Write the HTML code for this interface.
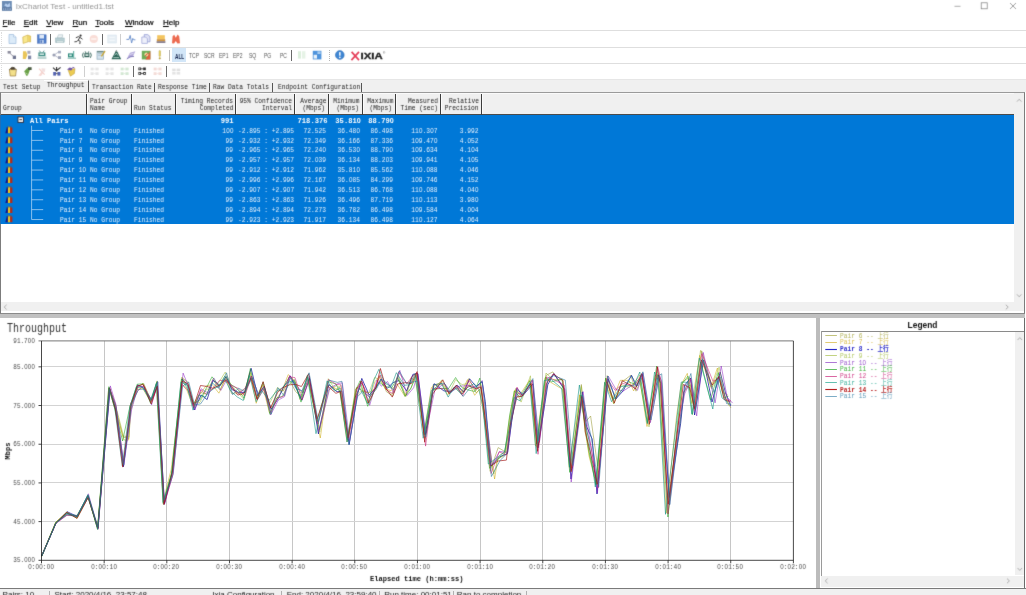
<!DOCTYPE html>
<html><head><meta charset="utf-8"><title>IxChariot Test - untitled1.tst</title>
<style>
html,body{margin:0;padding:0;background:#fff;}
#w{position:relative;width:1026px;height:595px;overflow:hidden;background:#fff;font-family:"Liberation Sans",sans-serif;}
#w div,#w svg{position:absolute;}
#L0,#L1{left:0;top:0;width:1026px;height:595px;}
#L1{filter:url(#bl);}
.m{font-family:"Liberation Mono","Noto Sans CJK SC",monospace;white-space:pre;line-height:10px;height:10px;}
.m i{display:inline-block;width:0.6001em;text-align:center;font-style:normal;font-family:"Liberation Sans",sans-serif;}
.s{font-family:"Liberation Sans",sans-serif;white-space:pre;}
u{text-decoration:underline;text-decoration-thickness:0.55px;text-underline-offset:0.6px;}
</style></head><body><svg width="0" height="0" style="position:absolute"><defs><filter id="bl" x="0" y="0" width="100%" height="100%" color-interpolation-filters="sRGB"><feConvolveMatrix order="3" kernelMatrix="0.022 0.145 0.022 0.145 1 0.145 0.022 0.145 0.022" divisor="1.668" edgeMode="none" preserveAlpha="false"/></filter></defs></svg><div id="w">
<div id="L0">
<div style="left:0px;top:30.2px;width:1026px;height:1px;background:#dedede;"></div>
<div style="left:0px;top:46.6px;width:1026px;height:1px;background:#dedede;"></div>
<div style="left:0px;top:62.9px;width:1026px;height:1px;background:#dedede;"></div>
<div style="left:0px;top:79.3px;width:1026px;height:0.8px;background:#e6e6e6;"></div>
<div style="left:1px;top:32px;width:0;height:46px;border-left:1px dotted #dcdcdc;"></div>
<div style="left:50.2px;top:33.5px;width:0.8px;height:11.299999999999997px;background:#6a6a6a;"></div>
<div style="left:69.19999999999999px;top:33.5px;width:0.8px;height:11.299999999999997px;background:#cfcfcf;"></div>
<div style="left:102.19999999999999px;top:33.5px;width:0.8px;height:11.299999999999997px;background:#6a6a6a;"></div>
<div style="left:120.19999999999999px;top:33.5px;width:0.8px;height:11.299999999999997px;background:#cfcfcf;"></div>
<div style="left:169.2px;top:49.5px;width:0.8px;height:11.5px;background:#bdbdbd;"></div>
<div style="left:171.5px;top:48.4px;width:14.4px;height:13.4px;background:#d2e6f8;"></div>
<div style="left:291.20000000000005px;top:49.5px;width:0.8px;height:11.5px;background:#6a6a6a;"></div>
<div style="left:329px;top:49.5px;width:0;height:11.5px;border-left:1px dotted #b5b5b5;"></div>
<div style="left:84.19999999999999px;top:65.5px;width:0.8px;height:11.5px;background:#cfcfcf;"></div>
<div style="left:133.2px;top:65.5px;width:0.8px;height:11.5px;background:#6a6a6a;"></div>
<div style="left:166.2px;top:65.5px;width:0.8px;height:11.5px;background:#6a6a6a;"></div>
<div style="left:0px;top:80px;width:1026px;height:12.4px;background:#f0f0f0;"></div>
<div style="left:43.5px;top:80px;width:44.5px;height:13px;background:#f0f0f0;border-right:1px solid #555;border-top:0.6px solid #fff;"></div>
<div style="left:153.79999999999998px;top:82.6px;width:0.9px;height:9px;background:#555;"></div>
<div style="left:209.4px;top:82.6px;width:0.9px;height:9px;background:#555;"></div>
<div style="left:272.20000000000005px;top:82.6px;width:0.9px;height:9px;background:#555;"></div>
<div style="left:361.20000000000005px;top:82.6px;width:0.9px;height:9px;background:#555;"></div>
<div style="left:0px;top:92px;width:1025.1px;height:221.6px;background:#fff;box-sizing:border-box;border:1px solid #7c7c7c;border-top-color:#9a9a9a;border-bottom:1.4px solid #8a8a8a;"></div>
<div style="left:1px;top:93px;width:1013px;height:21.6px;background:#f0f0f0;"></div>
<div style="left:1px;top:114.2px;width:1013px;height:0.9px;background:#4a4a4a;"></div>
<div style="left:85.9px;top:93px;width:1px;height:21.6px;background:#3c3c3c;"></div>
<div style="left:86.9px;top:93px;width:0.8px;height:21.4px;background:#fbfbfb;"></div>
<div style="left:131.0px;top:93px;width:1px;height:21.6px;background:#3c3c3c;"></div>
<div style="left:132.0px;top:93px;width:0.8px;height:21.4px;background:#fbfbfb;"></div>
<div style="left:175.3px;top:93px;width:1px;height:21.6px;background:#3c3c3c;"></div>
<div style="left:176.3px;top:93px;width:0.8px;height:21.4px;background:#fbfbfb;"></div>
<div style="left:235.1px;top:93px;width:1px;height:21.6px;background:#3c3c3c;"></div>
<div style="left:236.1px;top:93px;width:0.8px;height:21.4px;background:#fbfbfb;"></div>
<div style="left:294.0px;top:93px;width:1px;height:21.6px;background:#3c3c3c;"></div>
<div style="left:295.0px;top:93px;width:0.8px;height:21.4px;background:#fbfbfb;"></div>
<div style="left:328.1px;top:93px;width:1px;height:21.6px;background:#3c3c3c;"></div>
<div style="left:329.1px;top:93px;width:0.8px;height:21.4px;background:#fbfbfb;"></div>
<div style="left:361.7px;top:93px;width:1px;height:21.6px;background:#3c3c3c;"></div>
<div style="left:362.7px;top:93px;width:0.8px;height:21.4px;background:#fbfbfb;"></div>
<div style="left:395.1px;top:93px;width:1px;height:21.6px;background:#3c3c3c;"></div>
<div style="left:396.1px;top:93px;width:0.8px;height:21.4px;background:#fbfbfb;"></div>
<div style="left:439.9px;top:93px;width:1px;height:21.6px;background:#3c3c3c;"></div>
<div style="left:440.9px;top:93px;width:0.8px;height:21.4px;background:#fbfbfb;"></div>
<div style="left:480.6px;top:93px;width:1px;height:21.6px;background:#3c3c3c;"></div>
<div style="left:481.6px;top:93px;width:0.8px;height:21.4px;background:#fbfbfb;"></div>
<div style="left:1px;top:93px;width:1013px;height:0.7px;background:#fafafa;"></div>
<div style="left:1px;top:115.0px;width:1013px;height:108.60000000000001px;background:#0078d7;"></div>
<div style="left:0px;top:115.0px;width:1px;height:108.60000000000001px;background:#1f6fb8;"></div>
<svg style="left:0;top:0" width="60" height="230" viewBox="0 0 60 230"><path d="M31.6 125.7V219.5M31.6 130.45H43.2M31.6 140.35H43.2M31.6 150.25H43.2M31.6 160.15H43.2M31.6 170.05H43.2M31.6 179.95H43.2M31.6 189.85H43.2M31.6 199.75H43.2M31.6 209.65H43.2M31.6 219.55H43.2" stroke="#a9d1f3" stroke-width=".8" fill="none"/></svg>
<div style="left:1014px;top:93px;width:10.2px;height:209.5px;background:#f0f0f0;"></div>
<div style="left:1px;top:302.4px;width:1023.2px;height:9.1px;background:#f0f0f0;"></div>
<div style="left:0px;top:313.6px;width:1024.6px;height:4.0px;background:#c1c1c1;"></div>
<div style="left:815.7px;top:317.6px;width:4.7px;height:270px;background:#bcbcbc;"></div>
<svg style="left:0;top:0" width="816" height="588" viewBox="0 0 816 588"><path d="M104.5 340.9V560.3M166.5 340.9V560.3M229.5 340.9V560.3M292.5 340.9V560.3M354.5 340.9V560.3M417.5 340.9V560.3M480.5 340.9V560.3M542.5 340.9V560.3M605.5 340.9V560.3M668.5 340.9V560.3M730.5 340.9V560.3" stroke="#c6c6c6" stroke-width="1" fill="none"/><path d="M41.5 521.5H793.4M41.5 482.5H793.4M41.5 444.5H793.4M41.5 405.5H793.4M41.5 366.5H793.4" stroke="#d3d3d3" stroke-width="1" fill="none"/><path d="M41.8 555.5L56.0 522.0L66.9 512.8L77.0 516.7L88.0 495.7L97.7 527.1L109.5 388.8L115.1 404.9L123.0 437.0L128.8 438.5L130.9 410.3L137.6 386.8L143.7 383.4L151.3 401.2L157.0 380.9L163.8 505.0L172.1 472.6L182.2 378.0L187.9 382.0L193.7 403.3L200.5 392.5L206.8 394.2L212.7 379.5L220.0 389.9L225.7 377.3L231.6 393.5L238.3 392.7L244.9 388.5L250.9 376.3L257.2 398.7L263.2 387.8L270.6 408.1L277.8 390.2L283.5 390.8L289.3 379.5L295.4 391.3L301.6 397.1L308.2 379.3L319.5 430.0L328.7 389.8L336.7 385.5L340.8 388.6L348.1 441.2L356.5 387.4L361.0 389.9L368.6 392.9L375.6 388.5L379.9 375.6L386.4 391.7L392.8 396.0L397.9 375.3L405.9 396.4L412.5 375.7L416.6 373.4L424.8 438.3L433.2 384.6L442.4 384.1L449.3 393.6L456.9 385.3L462.7 392.0L469.0 378.5L476.2 392.9L481.6 387.5L484.3 408.5L490.1 471.3L498.2 447.6L506.0 452.2L510.5 415.4L515.6 388.6L521.2 397.1L530.9 383.4L537.9 443.2L546.3 375.3L552.9 371.9L564.1 389.5L571.4 470.3L581.3 384.5L585.9 421.5L590.6 416.0L597.6 466.0L607.2 375.6L613.7 403.8L622.6 381.5L630.7 375.3L636.0 391.2L641.9 377.9L649.1 420.3L657.1 374.1L660.6 383.6L667.8 499.7L679.4 428.2L683.6 392.0L690.3 384.7L694.1 408.6L701.7 350.8L712.1 386.9L719.1 376.5L725.5 398.1L730.9 407.9" stroke="#8c8c1e" stroke-width="0.5" fill="none" stroke-linejoin="round"/><path d="M41.8 555.8L55.6 522.4L66.6 512.2L76.9 518.1L88.0 495.9L97.6 529.2L108.7 388.2L115.0 408.9L124.0 440.0L128.6 440.0L130.2 405.7L136.7 389.7L142.5 388.0L150.7 402.1L156.5 387.0L163.3 501.0L171.2 469.4L181.6 384.1L186.8 390.0L193.5 407.3L199.4 395.0L205.8 386.1L212.2 384.5L218.9 393.2L224.9 380.5L230.9 386.3L237.0 392.8L243.4 395.3L249.9 372.6L256.2 403.3L262.5 385.4L269.5 413.0L276.4 399.2L282.3 389.9L288.2 374.6L294.0 380.0L300.1 399.6L307.2 376.7L320.3 438.0L327.6 384.8L335.1 388.2L339.8 390.4L347.0 442.0L355.4 389.2L360.5 385.8L367.8 402.9L374.9 381.8L379.2 376.7L385.1 388.7L391.1 390.8L396.8 383.6L404.9 396.3L411.2 377.4L415.7 381.9L424.1 432.7L431.4 387.5L441.1 382.0L447.6 394.9L455.3 387.8L460.9 393.2L467.5 379.6L474.7 395.3L479.4 389.3L482.9 410.1L494.6 479.0L497.7 458.9L504.5 455.4L509.2 420.5L514.3 390.6L520.4 394.0L530.0 379.5L535.6 446.0L545.1 377.8L550.9 382.4L562.4 389.3L569.3 467.3L579.5 394.9L584.1 419.0L589.0 455.9L596.1 484.0L604.6 382.7L612.6 399.1L620.3 380.3L629.0 380.4L633.6 390.9L639.8 378.9L647.0 426.5L655.1 375.2L658.6 377.9L666.2 513.2L676.8 414.4L681.2 384.6L687.3 373.4L691.9 403.5L699.7 355.3L711.1 387.2L717.4 368.0L722.6 392.5L727.8 395.1" stroke="#c9a400" stroke-width="0.5" fill="none" stroke-linejoin="round"/><path d="M41.8 556.1L56.0 522.9L67.1 511.7L77.3 516.5L88.2 497.6L97.9 528.3L110.0 389.3L115.6 409.3L123.5 466.7L131.1 404.4L137.6 384.9L143.5 387.7L151.3 400.1L157.4 386.2L164.5 504.1L172.5 470.1L182.3 379.2L188.1 386.0L194.2 410.0L201.2 395.0L207.1 399.6L213.0 380.4L219.9 385.3L226.3 376.5L231.8 389.5L238.2 392.2L244.6 392.5L251.1 368.3L257.8 395.9L264.2 386.2L271.1 409.3L278.2 398.6L283.7 386.8L290.2 376.1L295.8 386.8L301.8 400.3L309.5 378.4L318.4 433.9L328.8 384.5L337.0 391.8L341.8 391.0L349.2 444.5L357.6 394.0L361.8 378.4L369.2 395.1L376.0 387.9L381.0 379.1L387.1 388.5L393.1 382.5L399.1 380.5L406.7 390.9L412.9 374.3L417.9 373.6L425.3 434.7L434.1 383.7L443.9 390.9L450.1 391.4L457.1 385.2L463.7 392.0L469.6 378.8L476.1 386.5L482.2 381.7L485.3 401.7L490.8 465.9L499.6 456.8L507.3 453.7L511.5 422.8L516.9 388.2L522.9 395.6L532.8 383.9L538.0 447.9L547.8 384.7L553.8 373.7L564.2 388.9L571.0 479.0L582.3 391.9L586.5 426.3L592.2 439.0L597.0 494.0L608.1 378.9L615.7 399.1L623.1 390.9L631.5 375.3L636.3 386.6L642.3 374.1L649.8 420.0L658.2 374.9L660.8 383.2L669.4 497.7L680.6 423.8L684.6 385.3L690.6 377.9L694.6 415.0L703.6 360.0L712.0 402.0L720.2 372.1L725.5 392.9L730.7 405.9" stroke="#10109a" stroke-width="0.72" fill="none" stroke-linejoin="round"/><path d="M41.8 556.6L55.8 522.5L66.8 512.1L77.0 518.3L88.1 497.5L97.7 529.5L109.5 387.8L115.2 403.6L123.5 436.0L128.9 437.0L130.6 405.4L137.4 388.7L142.9 383.4L151.0 399.8L156.9 382.5L163.4 504.5L172.2 470.2L181.8 377.0L187.5 385.5L193.3 402.9L199.8 402.6L206.5 389.0L212.6 389.5L219.3 381.8L225.2 372.1L231.0 385.0L237.4 392.1L244.1 399.6L250.7 372.5L257.0 399.1L263.0 384.1L269.5 403.7L277.4 387.5L282.8 391.3L289.0 376.8L294.4 380.9L301.0 393.0L308.5 380.9L319.8 432.0L328.3 378.7L335.4 390.4L340.7 385.6L348.0 437.7L356.1 396.7L361.1 391.2L368.8 392.9L374.7 377.3L379.7 380.2L386.1 389.2L392.0 394.5L397.5 377.4L404.9 394.8L411.1 387.9L416.4 374.3L424.0 434.5L432.6 391.6L441.8 379.9L448.8 393.8L455.6 379.6L462.1 384.6L467.8 383.5L475.5 391.3L480.9 383.7L483.4 405.8L493.8 474.0L498.4 457.0L505.4 450.5L509.9 426.5L515.3 389.9L521.1 402.1L530.4 375.8L536.8 447.3L546.0 373.0L552.6 379.4L562.9 379.9L571.2 467.9L581.3 386.4L584.9 430.7L589.7 456.8L596.5 483.1L605.6 378.0L613.6 403.7L621.2 384.6L629.3 387.3L634.6 382.4L639.9 375.0L649.0 426.9L656.9 377.0L660.2 377.8L668.2 514.0L677.6 427.4L682.5 382.0L689.1 377.6L693.4 405.6L700.5 350.4L711.4 388.6L719.1 367.1L724.5 394.9L729.0 405.7" stroke="#9ab82e" stroke-width="0.5" fill="none" stroke-linejoin="round"/><path d="M41.8 555.9L56.0 522.9L67.1 515.2L77.3 516.2L88.4 493.8L98.0 529.2L110.3 385.9L115.7 403.7L123.9 464.8L131.6 409.8L138.1 385.9L144.3 386.9L151.6 404.9L157.8 382.0L164.2 504.6L173.3 473.0L183.1 373.1L188.4 386.3L195.1 409.9L201.1 388.7L207.6 392.9L213.8 377.9L220.8 390.4L227.0 379.4L232.5 387.5L238.8 394.0L245.6 387.9L251.6 376.3L258.2 394.0L264.1 386.5L270.6 415.0L278.3 400.1L284.6 396.6L289.9 375.4L295.7 384.7L302.8 393.0L309.4 376.1L318.7 431.3L329.8 388.2L337.6 383.7L342.3 382.8L349.6 440.5L358.1 388.3L362.3 381.8L369.7 405.3L376.9 380.0L381.3 386.2L387.5 381.5L393.9 392.7L399.8 370.3L407.2 395.4L413.6 387.8L417.7 374.1L425.8 433.5L434.9 389.7L444.6 383.6L451.1 392.2L457.5 386.4L464.4 385.8L470.1 385.5L476.7 387.9L482.1 380.5L485.5 412.1L492.1 464.9L499.5 451.4L507.9 452.5L511.8 418.1L517.9 393.4L522.6 394.7L532.8 380.5L539.4 442.3L547.6 380.6L554.4 373.9L564.9 389.0L571.2 482.0L583.1 391.6L587.4 424.4L592.8 457.8L597.4 493.0L608.2 376.0L616.2 389.7L623.5 390.9L632.1 385.3L637.5 390.3L643.0 372.8L650.4 422.7L659.4 375.8L661.6 381.6L669.5 505.1L680.2 416.9L684.8 393.5L691.0 379.8L696.7 415.9L703.2 352.4L715.1 402.9L721.2 366.0L727.2 397.3L732.6 403.1" stroke="#8a1fc0" stroke-width="0.52" fill="none" stroke-linejoin="round"/><path d="M41.8 555.5L55.8 522.4L66.7 514.9L77.0 515.6L87.9 495.5L97.6 528.0L108.8 386.7L115.0 409.8L122.6 441.0L129.9 406.5L137.2 384.2L143.0 383.9L150.6 403.4L156.8 382.3L163.2 503.5L171.6 473.2L181.4 378.9L186.9 387.9L193.3 403.6L199.9 400.0L206.2 388.4L212.0 376.8L218.8 386.0L224.9 375.9L230.9 384.4L237.5 388.9L244.0 398.0L250.3 368.6L256.8 397.5L263.2 381.9L269.9 414.3L276.9 397.7L282.2 396.6L288.4 385.1L294.7 379.7L301.0 402.1L307.4 375.3L317.0 421.5L328.0 381.6L335.8 383.9L340.0 392.4L347.3 439.7L355.9 389.7L360.1 380.8L367.7 406.3L375.0 388.9L379.0 382.2L385.0 386.2L391.6 388.1L397.5 377.5L405.1 396.4L410.6 389.0L416.0 375.3L424.3 434.7L432.6 389.6L441.7 388.3L448.3 388.9L455.6 377.5L461.9 387.6L467.8 389.9L474.7 391.5L479.8 378.1L482.8 404.1L489.5 468.3L497.5 459.9L504.8 453.0L509.7 414.9L514.4 391.1L520.0 397.0L529.9 380.8L536.6 444.0L545.5 377.2L551.4 381.8L562.1 379.2L569.7 472.4L580.9 395.0L584.6 421.5L588.8 450.1L596.1 485.1L605.6 378.3L613.5 399.7L620.9 391.0L628.6 381.7L634.5 384.2L639.4 378.7L647.3 422.6L656.7 366.0L658.6 381.4L667.9 517.0L677.5 422.7L682.1 383.8L688.0 376.1L692.4 414.6L700.8 362.0L710.5 399.9L718.2 372.7L723.6 398.2L728.3 396.3" stroke="#16a016" stroke-width="0.52" fill="none" stroke-linejoin="round"/><path d="M41.8 555.4L55.9 523.6L67.0 514.9L77.2 515.9L88.2 495.7L98.0 528.4L109.6 388.1L115.8 404.9L123.5 463.7L130.8 403.3L137.9 390.9L143.7 385.1L151.5 401.5L157.3 386.7L164.1 504.2L172.6 475.6L182.2 384.6L188.2 390.4L194.1 407.9L200.6 389.9L206.9 394.7L212.6 388.3L219.7 380.2L225.8 381.1L231.7 385.5L237.9 388.2L244.9 395.9L251.4 376.1L257.4 399.8L263.7 389.4L270.9 412.8L277.4 398.4L283.9 396.0L289.1 376.7L295.0 377.7L302.2 399.8L309.0 380.7L318.0 424.0L328.4 379.6L336.9 384.6L341.0 384.8L348.3 439.6L356.9 394.3L361.6 382.9L369.7 397.9L376.4 384.5L380.2 374.9L386.6 390.0L392.6 393.5L398.5 372.1L406.7 383.8L412.7 376.0L416.7 373.0L425.6 446.1L432.9 388.3L443.3 388.7L449.4 392.7L456.6 387.0L462.7 396.0L468.8 380.5L476.3 389.5L481.1 385.6L484.3 415.4L491.1 473.5L499.1 451.9L506.6 454.9L511.5 416.0L517.0 387.1L521.7 396.2L532.3 380.0L538.0 454.3L546.6 377.0L553.5 379.6L564.4 385.3L571.7 468.1L581.7 395.9L586.7 430.4L590.8 445.7L598.1 488.0L606.7 378.4L615.2 390.4L622.6 383.4L631.3 385.6L636.0 383.4L641.5 374.4L649.8 417.7L657.7 366.6L661.6 382.9L667.9 513.9L678.9 418.5L684.2 391.8L690.6 378.7L694.5 410.5L701.8 353.7L713.0 381.3L719.7 378.1L725.5 398.8L730.9 401.0" stroke="#c81470" stroke-width="0.52" fill="none" stroke-linejoin="round"/><path d="M41.8 556.1L55.6 523.6L66.7 513.1L76.9 517.6L87.8 494.7L97.6 529.4L109.0 388.3L114.8 408.2L122.3 465.8L129.8 407.1L136.4 387.0L142.7 387.5L150.3 400.8L156.3 383.4L163.0 502.4L171.5 475.2L180.9 382.0L187.1 385.4L193.0 410.1L199.0 394.9L205.6 397.0L212.0 382.7L218.4 388.1L224.8 378.8L230.5 390.9L237.2 396.9L243.3 400.5L249.6 375.5L256.2 401.7L262.1 391.2L269.1 400.5L276.1 391.5L281.6 388.2L287.9 382.2L293.7 381.2L300.1 398.5L307.7 377.3L316.0 433.7L327.0 380.9L334.7 391.2L339.8 388.1L347.1 442.0L355.1 397.2L359.8 387.8L367.8 403.9L374.2 379.5L378.9 369.3L385.1 383.4L391.2 386.6L396.4 372.7L404.4 385.3L409.9 384.7L415.1 373.6L423.2 438.2L431.4 390.6L441.4 383.4L448.2 397.1L454.2 387.0L461.4 394.1L466.6 388.1L474.1 383.5L478.8 389.3L482.8 405.9L488.3 464.0L496.5 458.1L504.3 452.1L509.3 428.6L513.9 397.5L519.9 400.8L529.7 383.6L536.2 453.6L544.2 380.5L551.1 379.4L561.6 388.2L569.5 467.2L579.4 385.0L584.0 417.7L588.7 439.3L595.3 487.0L604.7 382.2L611.5 401.7L620.4 386.7L628.6 385.6L633.6 385.9L639.8 372.0L647.3 423.7L654.6 372.0L658.5 385.5L665.5 514.3L676.7 420.2L681.3 382.0L687.8 382.4L691.9 414.2L699.3 358.1L712.8 409.0L717.0 377.7L722.0 397.9L727.6 402.2" stroke="#0a9080" stroke-width="0.58" fill="none" stroke-linejoin="round"/><path d="M41.8 555.7L56.0 522.8L66.9 512.4L77.1 518.4L88.1 497.4L97.8 527.8L109.4 387.9L115.4 409.0L122.7 467.1L131.0 406.3L137.2 386.1L143.0 384.3L151.3 403.9L157.3 385.8L164.1 503.7L172.3 472.9L182.1 381.2L187.9 383.6L194.0 405.5L200.5 385.5L206.6 386.4L212.8 388.3L219.8 385.1L226.1 379.6L231.5 386.8L237.8 395.1L244.3 393.0L251.0 378.2L257.0 399.5L263.1 381.7L270.6 408.1L277.8 392.2L282.8 387.7L289.2 384.9L295.4 384.3L301.4 386.5L308.6 373.8L317.2 418.8L327.9 386.3L335.9 393.3L340.4 391.7L348.1 437.8L356.9 388.8L361.5 380.9L368.4 403.1L375.8 388.2L380.4 368.5L386.3 389.0L392.3 397.1L397.8 383.9L406.1 382.6L411.4 383.6L417.1 371.6L424.7 442.2L432.6 394.2L442.8 379.8L449.2 393.7L456.2 385.2L462.1 394.2L468.4 385.8L475.7 388.5L480.9 387.4L484.8 415.3L490.5 466.2L498.0 461.0L506.4 460.1L510.3 425.3L516.6 396.8L521.6 396.6L531.2 383.5L537.5 451.3L546.5 383.6L553.3 373.9L562.9 380.6L571.2 471.7L582.0 396.6L585.3 432.1L591.0 455.0L597.3 484.2L607.0 381.7L614.3 403.1L622.2 380.7L630.5 385.1L635.4 389.1L641.8 373.5L649.3 424.3L657.3 366.9L660.0 383.2L668.2 504.2L678.2 425.3L683.3 384.5L689.7 387.7L694.8 408.7L701.7 360.0L712.1 385.0L718.7 376.6L724.4 399.6L729.9 401.7" stroke="#a01010" stroke-width="0.66" fill="none" stroke-linejoin="round"/><path d="M41.8 555.4L56.2 522.7L67.0 514.0L77.3 515.5L88.3 495.3L98.0 526.9L109.7 389.4L116.0 406.8L123.6 464.8L131.4 405.2L138.3 389.6L144.1 389.0L151.4 399.0L157.6 381.3L164.1 500.2L172.9 474.8L182.6 386.1L188.7 382.0L194.6 405.0L200.7 403.8L207.3 393.9L213.4 388.9L220.5 385.5L226.5 372.8L232.6 394.7L238.5 388.1L244.9 391.8L252.0 377.9L258.4 393.8L264.5 388.2L271.2 414.2L277.8 387.7L284.2 395.9L290.1 377.8L295.9 388.6L302.0 390.7L309.1 372.8L318.3 421.7L329.0 380.1L337.4 382.4L341.9 381.3L348.9 444.8L357.4 396.8L362.6 391.7L369.4 396.8L376.2 389.4L381.5 379.1L387.1 383.2L393.6 389.9L399.1 371.0L406.6 383.3L413.1 382.0L417.5 381.0L425.7 437.1L433.7 384.7L444.2 383.1L450.0 392.7L457.2 387.9L463.2 396.5L469.2 388.8L476.9 385.9L482.1 381.5L485.2 405.0L491.4 476.5L500.2 460.3L506.9 453.7L512.2 415.5L517.5 390.3L523.3 393.9L532.9 378.6L538.4 441.0L548.1 378.0L553.8 375.7L565.3 380.1L572.7 465.5L582.5 394.8L587.5 420.3L591.4 438.1L598.7 486.9L607.7 376.0L615.6 399.2L624.2 386.9L631.4 375.8L637.5 385.8L642.9 371.8L651.0 419.9L659.2 375.3L661.7 373.8L669.8 504.5L680.8 416.6L684.0 392.3L690.9 373.5L695.6 409.8L702.5 358.8L714.0 392.4L720.2 376.8L726.6 403.6L731.3 404.3" stroke="#2a7498" stroke-width="0.58" fill="none" stroke-linejoin="round"/><path d="M41.8 556.0L55.9 523.0L66.9 513.4L77.1 516.7L88.1 496.0L97.8 528.3L109.5 387.6" stroke="#2c6c70" stroke-width=".75" fill="none" stroke-linejoin="round"/><path d="M38.5 340.9H793.4" stroke="#777" stroke-width="1"/><path d="M41.5 340.9V560.6999999999999M793.4 340.9V563.3M38.5 560.3H793.4" stroke="#1a1a1a" stroke-width=".8" fill="none"/><path d="M41.50 560.3v3M104.16 560.3v3M166.82 560.3v3M229.47 560.3v3M292.13 560.3v3M354.79 560.3v3M417.45 560.3v3M480.11 560.3v3M542.77 560.3v3M605.42 560.3v3M668.08 560.3v3M730.74 560.3v3M38.5 521.61h3M38.5 482.91h3M38.5 444.22h3M38.5 405.52h3M38.5 366.83h3" stroke="#1a1a1a" stroke-width=".8" fill="none"/></svg>
<div style="left:820.5px;top:317.6px;width:205px;height:270px;background:#fff;"></div>
<div style="left:820.5px;top:331.2px;width:204.5px;height:0.9px;background:#8a8a8a;"></div>
<div style="left:820.5px;top:331.2px;width:0.9px;height:256px;background:#9a9a9a;"></div>
<div style="left:1024.2px;top:317.6px;width:0.9px;height:270px;background:#6a6a6a;"></div>
<div style="left:1015.2px;top:332px;width:9px;height:243px;background:#f0f0f0;"></div>
<div style="left:821.4px;top:576.2px;width:203px;height:10.6px;background:#f0f0f0;"></div>
<svg style="left:824px;top:333px" width="14" height="5" viewBox="0 0 14 5"><path d="M1.3 2.5H12.9" stroke="#b4b45c" stroke-width="0.8"/></svg>
<svg style="left:824px;top:340px" width="14" height="5" viewBox="0 0 14 5"><path d="M1.3 2.5H12.9" stroke="#d9bd4c" stroke-width="0.8"/></svg>
<svg style="left:824px;top:347px" width="14" height="5" viewBox="0 0 14 5"><path d="M1.3 2.5H12.9" stroke="#2a2ac8" stroke-width="1.15"/></svg>
<svg style="left:824px;top:353px" width="14" height="5" viewBox="0 0 14 5"><path d="M1.3 2.5H12.9" stroke="#b2c862" stroke-width="0.8"/></svg>
<svg style="left:824px;top:360px" width="14" height="5" viewBox="0 0 14 5"><path d="M1.3 2.5H12.9" stroke="#9a55cc" stroke-width="0.8"/></svg>
<svg style="left:824px;top:367px" width="14" height="5" viewBox="0 0 14 5"><path d="M1.3 2.5H12.9" stroke="#3cb03c" stroke-width="0.8"/></svg>
<svg style="left:824px;top:374px" width="14" height="5" viewBox="0 0 14 5"><path d="M1.3 2.5H12.9" stroke="#d0408a" stroke-width="0.8"/></svg>
<svg style="left:824px;top:380px" width="14" height="5" viewBox="0 0 14 5"><path d="M1.3 2.5H12.9" stroke="#3cb09c" stroke-width="0.8"/></svg>
<svg style="left:824px;top:387px" width="14" height="5" viewBox="0 0 14 5"><path d="M1.3 2.5H12.9" stroke="#b82020" stroke-width="1.15"/></svg>
<svg style="left:824px;top:394px" width="14" height="5" viewBox="0 0 14 5"><path d="M1.3 2.5H12.9" stroke="#5c98b8" stroke-width="0.8"/></svg>
<div style="left:0px;top:588.0px;width:1026px;height:8px;background:#f0f0f0;"></div>
<div style="left:0px;top:587.8px;width:1026px;height:1.0px;background:#7a7a7a;"></div>
<div style="left:48.6px;top:591.2px;width:0.8px;height:6px;background:#b0b0b0;"></div>
<div style="left:281.0px;top:591.2px;width:0.8px;height:6px;background:#b0b0b0;"></div>
<div style="left:379.20000000000005px;top:591.2px;width:0.8px;height:6px;background:#b0b0b0;"></div>
<div style="left:452.90000000000003px;top:591.2px;width:0.8px;height:6px;background:#b0b0b0;"></div>
<div style="left:525.9px;top:591.2px;width:0.8px;height:6px;background:#b0b0b0;"></div>
</div>
<div id="L1">
<svg style="left:2.2px;top:1.2px" width="10" height="10" viewBox="0 0 10 10"><rect x="0" y="0" width="9.8" height="9.6" fill="#6c8cb4"/><path d="M2.2 4.6l1.6-2.4 1.8 1.6 2-2 .8 3.4-2.6 1.2z" fill="#b6ceee"/><rect x="0" y="6.4" width="9.8" height="3.2" fill="#5c7aa2"/><path d="M1.6 7.2v1.8M3.4 7.2v1.8M5.2 7.2v1.8M7 7.2v1.8M8.4 7.2v1.8" stroke="#a9bfdc" stroke-width=".7"/></svg>
<div class="s" style="left:15.8px;top:1.7px;font-size:8.1px;line-height:10px;color:#969696;">IxChariot Test - untitled1.tst</div>
<svg style="left:950px;top:0" width="76" height="14" viewBox="0 0 76 14"><path d="M4.5 6.3h6" stroke="#8a8a8a" stroke-width="0.7"/><rect x="31.2" y="2.8" width="6" height="6" fill="none" stroke="#7a7a7a" stroke-width="0.7"/><path d="M60 3l6 6M66 3l-6 6" stroke="#7a7a7a" stroke-width="0.7"/></svg>
<div class="s" style="left:2.6px;top:17.6px;font-size:8px;line-height:10px;color:#000;-webkit-text-stroke:0.2px #000;width:11.6px;text-align:justify;"><u>F</u>ile</div>
<div class="s" style="left:23.7px;top:17.6px;font-size:8px;line-height:10px;color:#000;-webkit-text-stroke:0.2px #000;width:13.5px;text-align:justify;"><u>E</u>dit</div>
<div class="s" style="left:46.2px;top:17.6px;font-size:8px;line-height:10px;color:#000;-webkit-text-stroke:0.2px #000;width:17px;text-align:justify;"><u>V</u>iew</div>
<div class="s" style="left:72.5px;top:17.6px;font-size:8px;line-height:10px;color:#000;-webkit-text-stroke:0.2px #000;width:13.5px;text-align:justify;"><u>R</u>un</div>
<div class="s" style="left:95.3px;top:17.6px;font-size:8px;line-height:10px;color:#000;-webkit-text-stroke:0.2px #000;width:19.3px;text-align:justify;"><u>T</u>ools</div>
<div class="s" style="left:125px;top:17.6px;font-size:8px;line-height:10px;color:#000;-webkit-text-stroke:0.2px #000;width:28px;text-align:justify;"><u>W</u>indow</div>
<div class="s" style="left:163px;top:17.6px;font-size:8px;line-height:10px;color:#000;-webkit-text-stroke:0.2px #000;width:16.5px;text-align:justify;"><u>H</u>elp</div>
<svg style="left:8px;top:34.3px" width="9" height="10" viewBox="0 0 9 10"><path d="M1 .5h4.5l2.5 2.5v6.5h-7z" fill="#dcebf8" stroke="#9dbbdc" stroke-width=".7"/><path d="M5.5 .5v2.5h2.5" fill="#f4f9fd" stroke="#9dbbdc" stroke-width=".6"/></svg>
<svg style="left:22px;top:34.3px" width="10" height="10" viewBox="0 0 10 10"><path d="M.8 3l5-2 .3 6.8-5 1.6z" fill="#f8e88e" stroke="#c9a63a" stroke-width=".6"/><path d="M6 1.2l2.6.8v6l-2.4-.4" fill="#efd465" stroke="#c9a63a" stroke-width=".5"/></svg>
<svg style="left:37px;top:34.3px" width="10" height="10" viewBox="0 0 10 10"><rect x=".5" y=".8" width="8.6" height="8.4" fill="#4f7dca" stroke="#3a63b0" stroke-width=".5"/><rect x="2.4" y=".9" width="4.6" height="3.6" fill="#dfe9f7"/><rect x="2.8" y="6" width="4" height="3.2" fill="#b9cdea"/><rect x="3.6" y="6.4" width="1.2" height="2.4" fill="#3a63b0"/></svg>
<svg style="left:55px;top:34.3px" width="10" height="10" viewBox="0 0 10 10"><path d="M2.2 4l1.2-3.2h4.4l-.8 3.2z" fill="#eef4f6" stroke="#9bb3b8" stroke-width=".5"/><rect x=".6" y="4" width="8.6" height="4.2" fill="#b9d0d4" stroke="#93b0b6" stroke-width=".5"/><rect x="1.6" y="7" width="6.6" height="1.8" fill="#e6eff0" stroke="#9db7bb" stroke-width=".4"/></svg>
<svg style="left:74px;top:34.3px" width="10" height="10" viewBox="0 0 10 10"><circle cx="6.6" cy="1.6" r="1.05" fill="#2a2a2a"/><path d="M2.2 3.6l2.4-1 2 1.2 1.6 1.2M5.8 3.4l-1.6 2.8 2 1.2-.4 2.4M4.2 6.2l-1.4 1.4-2 .2" fill="none" stroke="#2a2a2a" stroke-width=".9" stroke-linecap="round" stroke-linejoin="round"/></svg>
<svg style="left:89px;top:34.3px" width="10" height="10" viewBox="0 0 10 10"><circle cx="4.8" cy="5" r="4.1" fill="#f9ddd7"/><rect x="2.2" y="4.1" width="5.2" height="1.8" fill="#fdf1ee"/></svg>
<svg style="left:107px;top:34.3px" width="10" height="10" viewBox="0 0 10 10"><rect x=".8" y="1" width="8.6" height="8" fill="#e6eef4" stroke="#d3e0ea" stroke-width=".5"/><path d="M2.4 3.4h5.4M2.4 6.4h5.4" stroke="#f3f7fa" stroke-width="1.2"/></svg>
<svg style="left:126px;top:34.3px" width="10" height="10" viewBox="0 0 10 10"><path d="M.4 5.4h2.6l1.2-4 1.4 7.6 1.2-4.6 1 1.4h1.6" fill="none" stroke="#6a8fcb" stroke-width=".95" stroke-linejoin="round"/></svg>
<svg style="left:141px;top:34.3px" width="10" height="10" viewBox="0 0 10 10"><path d="M3.2 .6h3.6l2.2 2v5.2h-5.8z" fill="#dfe2f5" stroke="#8d95d0" stroke-width=".7"/><path d="M.8 3h3.8l1.8 1.8v4.6h-5.6z" fill="#eef0fa" stroke="#9aa1d6" stroke-width=".7"/></svg>
<svg style="left:156px;top:34.3px" width="10" height="10" viewBox="0 0 10 10"><rect x="1.2" y="1.2" width="7.6" height="4" fill="#f3c45e"/><rect x=".8" y="5.2" width="8.4" height="2.2" fill="#cf9440"/><rect x=".6" y="7.4" width="8.8" height="1.4" fill="#6a6078"/></svg>
<svg style="left:171px;top:34.3px" width="10" height="10" viewBox="0 0 10 10"><path d="M1 9.2l.6-7 1.6-1.4 1.6 3 1.8-3.2 1.6 1.6.8 7-2.6.2-1.6-2.4-1.8 2.4z" fill="#ec6a50"/></svg>
<svg style="left:7px;top:50.3px" width="10" height="10" viewBox="0 0 10 10"><rect x=".6" y="1" width="3.2" height="2.6" fill="#8d8d9d"/><rect x="5.8" y="5.6" width="3.2" height="3.4" fill="#6f7590"/><path d="M3 3.4l3.4 3" stroke="#8d8d9d" stroke-width=".9"/></svg>
<svg style="left:22px;top:50.3px" width="10" height="10" viewBox="0 0 10 10"><path d="M1 1.2h3l1.4 3.6-1.6 4.2h-3z" fill="#e9c55a"/><rect x="5.4" y=".8" width="3" height="3" fill="#a8a8b8"/><rect x="6" y="5.6" width="3.2" height="3.6" fill="#8088a8"/></svg>
<svg style="left:37px;top:50.3px" width="10" height="10" viewBox="0 0 10 10"><path d="M2.4.6l1.4 2M7.2.6l-1.4 2" stroke="#3f7f78" stroke-width=".8"/><rect x="1.4" y="2.4" width="7" height="3.8" fill="#3f8f86"/><rect x=".6" y="6.4" width="8.8" height="2.6" fill="#b9d3d0"/><rect x="2.6" y="3.4" width="4.4" height="1.6" fill="#cfe6e2"/></svg>
<svg style="left:52px;top:50.3px" width="10" height="10" viewBox="0 0 10 10"><circle cx="2" cy="5" r="1.6" fill="#9aa0b4"/><rect x="6" y=".8" width="3" height="2.6" fill="#a9afc2"/><rect x="6" y="6.2" width="3" height="2.8" fill="#9aa0b4"/><path d="M2.6 4.6l3.6-2.4M2.6 5.4l3.6 2.2" stroke="#a9afc2" stroke-width=".8"/></svg>
<svg style="left:67px;top:50.3px" width="10" height="10" viewBox="0 0 10 10"><rect x="1" y="3.4" width="5.6" height="4" fill="#2f8a7c"/><rect x="2.2" y="4.4" width="2.6" height="1.8" fill="#d5ece8"/><path d="M6.6 1v7.4" stroke="#6fb5a8" stroke-width="1.2"/><rect x=".6" y="7.6" width="8.4" height="1.4" fill="#9fc9c2"/></svg>
<svg style="left:81px;top:50.3px" width="11" height="10" viewBox="0 0 11 10"><rect x="3.4" y="3.2" width="5" height="4" fill="#2e5f55"/><rect x="4.4" y="4.2" width="3" height="1.8" fill="#cfe3de"/><path d="M2.4 2.6q-1.8 2.6 0 5.2M9.4 2.6q1.8 2.6 0 5.2M5 3l-.8-1.6M7 3l.8-1.6" fill="none" stroke="#2e5f55" stroke-width=".9"/></svg>
<svg style="left:96px;top:50.3px" width="10" height="10" viewBox="0 0 10 10"><rect x="1" y="1.2" width="6.4" height="8" fill="#d4e3ee" stroke="#8fa9bb" stroke-width=".7"/><path d="M2.2 3.4h4M2.2 5.2h3" stroke="#8fa9bb" stroke-width=".6"/><path d="M9 1l-3.6 5.4" stroke="#c9a83a" stroke-width="1.4"/><rect x="1" y="1" width="6.4" height="1.4" fill="#6b8a86"/></svg>
<svg style="left:111px;top:50.3px" width="11" height="10" viewBox="0 0 11 10"><path d="M.4 9.2l4-7.4 1.2-.6 1 1 3.6 7z" fill="#2c6658"/><path d="M4.4 1.4q1-1.4 1.8 0" fill="none" stroke="#2a3a34" stroke-width=".7"/><path d="M3.6 5.4l1.8-2.2 1.6 2.4M2.4 7.6h5.6" fill="none" stroke="#d9ebe6" stroke-width=".7"/></svg>
<svg style="left:126px;top:50.3px" width="11" height="10" viewBox="0 0 11 10"><path d="M1 8.4l3-5.6 5.4-1.6-2.6 5.4z" fill="#b3aadb"/><path d="M.8 9l3.4-2.2 3.8-.4" fill="none" stroke="#7c74b4" stroke-width=".9"/><path d="M3.6 4.6l4-1.4" stroke="#e9e6f6" stroke-width=".8"/></svg>
<svg style="left:141px;top:50.3px" width="10" height="10" viewBox="0 0 10 10"><rect x=".8" y=".8" width="8.6" height="8.6" fill="#6fae58"/><path d="M9.4.8v8.6h-5z" fill="#e0633f"/><circle cx="5.4" cy="4.6" r="2" fill="#f3d7a0"/><path d="M4 6.2l3-3" stroke="#d9472b" stroke-width="1"/></svg>
<svg style="left:156px;top:50.3px" width="8" height="10" viewBox="0 0 8 10"><rect x="3" y=".6" width="1.5" height="5.8" rx=".6" fill="#f0dc6a" stroke="#a8922e" stroke-width=".4"/><rect x="3" y="7.6" width="1.5" height="1.5" rx=".5" fill="#d0ba50" stroke="#968026" stroke-width=".35"/></svg>
<div class="s" style="left:174.6px;top:52.7px;font-size:6.4px;line-height:8px;font-weight:bold;color:#10204a;transform:scaleX(.74);transform-origin:0 50%;">ALL</div>
<div class="s" style="left:189px;top:51.6px;font-size:6.6px;line-height:8px;color:#555;transform:scaleX(.76);transform-origin:0 50%;">TCP</div>
<div class="s" style="left:203.5px;top:51.6px;font-size:6.6px;line-height:8px;color:#555;transform:scaleX(.76);transform-origin:0 50%;">SCR</div>
<div class="s" style="left:219px;top:51.6px;font-size:6.6px;line-height:8px;color:#555;transform:scaleX(.76);transform-origin:0 50%;">EP1</div>
<div class="s" style="left:233.2px;top:51.6px;font-size:6.6px;line-height:8px;color:#555;transform:scaleX(.76);transform-origin:0 50%;">EP2</div>
<div class="s" style="left:248.8px;top:51.6px;font-size:6.6px;line-height:8px;color:#555;transform:scaleX(.76);transform-origin:0 50%;">SQ</div>
<div class="s" style="left:263.6px;top:51.6px;font-size:6.6px;line-height:8px;color:#555;transform:scaleX(.76);transform-origin:0 50%;">PG</div>
<div class="s" style="left:279.9px;top:51.6px;font-size:6.6px;line-height:8px;color:#555;transform:scaleX(.76);transform-origin:0 50%;">PC</div>
<svg style="left:296.5px;top:50.3px" width="10" height="10" viewBox="0 0 10 10"><rect x="1" y="1.2" width="3" height="7.4" fill="#dcefdc"/><rect x="5" y="1.2" width="3.4" height="7.4" fill="#e6f3e6"/></svg>
<svg style="left:312px;top:50.3px" width="10" height="10" viewBox="0 0 10 10"><rect x=".8" y=".8" width="8.6" height="8.6" fill="#4e93dc"/><rect x="1.6" y="4.8" width="3.4" height="3.8" fill="#e9f2fb"/><rect x="5.4" y="1.4" width="3.2" height="2.6" fill="#a9cdf0"/></svg>
<svg style="left:335px;top:50.3px" width="10" height="10" viewBox="0 0 10 10"><circle cx="4.8" cy="5" r="4.4" fill="#3f86d3"/><circle cx="4.8" cy="5" r="4.4" fill="none" stroke="#2b69b0" stroke-width=".5"/><rect x="4.1" y="2" width="1.5" height="3.8" rx=".6" fill="#fff"/><circle cx="4.85" cy="7.3" r=".85" fill="#fff"/></svg>
<svg style="left:349px;top:49px" width="38" height="13" viewBox="0 0 38 13"><path d="M2.6 2.9l7.4 8.2M10 2.9l-7.6 8.2" stroke="#e5405a" stroke-width="1.7" stroke-linecap="butt"/><text x="11.6" y="10.3" font-family="Liberation Sans, sans-serif" font-weight="bold" font-size="9.6" fill="#222" textLength="22" lengthAdjust="spacingAndGlyphs" stroke="#222" stroke-width=".35">IXIA</text><text x="34" y="5" font-family="Liberation Sans, sans-serif" font-size="3" fill="#333">®</text></svg>
<svg style="left:8px;top:66.3px" width="10" height="11" viewBox="0 0 10 11"><path d="M1.4 3.6h7l-.8 6.4h-5.4z" fill="#f3e08a" stroke="#8a6a28" stroke-width=".6"/><path d="M1.6 3.6q3.2-4.6 6.4 0" fill="none" stroke="#3a3020" stroke-width=".9"/><rect x="3" y="1.6" width="3.8" height="2" fill="#4a4030"/></svg>
<svg style="left:23px;top:66.3px" width="10" height="11" viewBox="0 0 10 11"><path d="M1.2 5.2l3.4-3.4 2.2 2.4-2 5.4-1.6.2z" fill="#6ba24a"/><rect x="5" y="1.2" width="3.6" height="2.8" fill="#4a5a40"/><path d="M2.4 6.8l2.4 1.6" stroke="#b7d89a" stroke-width=".8"/></svg>
<svg style="left:37px;top:66.3px" width="10" height="11" viewBox="0 0 10 11"><path d="M1.4 9.6l3.2-4.2 1.8 1.2-2.4 3.4z" fill="#f6d8d4"/><path d="M4.4 2.2l4 .4-.6 3.4-3-.6z" fill="#f1e0e0"/><path d="M2 2.6l5.6 6" stroke="#f4cfc9" stroke-width="1.1"/></svg>
<svg style="left:52px;top:66.3px" width="10" height="11" viewBox="0 0 10 11"><path d="M1 1.6l3.4 3.2L8.6 1.4M4.6 1v4.4" stroke="#2d2d2d" stroke-width="1.1" fill="none"/><rect x="1.2" y="6" width="2.8" height="3.6" fill="#5262b0"/><rect x="5.4" y="6" width="3" height="3.6" fill="#5262b0"/><path d="M4 7.6h1.6" stroke="#333" stroke-width=".8"/></svg>
<svg style="left:66px;top:66.3px" width="11" height="11" viewBox="0 0 11 11"><path d="M2.2 4.2l6.8-1.6-.6 5-4 2.6z" fill="#eccb52" stroke="#b8962c" stroke-width=".5"/><path d="M1 3.4l2.6-1.8 3.2.6-1.6 2.2z" fill="#6f55a6"/><path d="M6.4 1.4l2 .4" stroke="#6f55a6" stroke-width="1"/></svg>
<svg style="left:90px;top:66.3px" width="10" height="11" viewBox="0 0 10 11"><g fill="#e6e6e6"><rect x=".6" y="1.6" width="3" height="2.8"/><rect x="5.4" y="1.6" width="3.2" height="2.8"/><rect x=".6" y="6.2" width="3" height="2.8"/><rect x="5.4" y="6.2" width="3.2" height="2.8"/></g><path d="M3.6 3h1.8M3.6 7.6h1.8" stroke="#e6e6e6" stroke-width=".8"/></svg>
<svg style="left:105px;top:66.3px" width="10" height="11" viewBox="0 0 10 11"><g fill="#e6e6e6"><rect x=".6" y="1.6" width="3" height="2.8"/><rect x="5.4" y="1.6" width="3.2" height="2.8"/><rect x=".6" y="6.2" width="3" height="2.8"/><rect x="5.4" y="6.2" width="3.2" height="2.8"/></g><path d="M3.6 3h1.8M3.6 7.6h1.8" stroke="#e6e6e6" stroke-width=".8"/></svg>
<svg style="left:120px;top:66.3px" width="10" height="11" viewBox="0 0 10 11"><g fill="#d4e8d4"><rect x=".6" y="1.6" width="3" height="2.8"/><rect x="5.4" y="1.6" width="3.2" height="2.8"/><rect x=".6" y="6.2" width="3" height="2.8"/><rect x="5.4" y="6.2" width="3.2" height="2.8"/></g><path d="M3.6 3h1.8M3.6 7.6h1.8" stroke="#d4e8d4" stroke-width=".8"/></svg>
<svg style="left:138.4px;top:66.3px" width="10" height="11" viewBox="0 0 10 11"><g fill="none" stroke="#2a2a2a" stroke-width=".8"><rect x=".8" y="1.9" width="1.9" height="1.9"/><rect x="5.6" y="1.9" width="1.9" height="1.9"/><path d="M2.7 2.85h2.9"/><rect x=".8" y="6.5" width="1.9" height="1.9"/><rect x="5.6" y="6.5" width="1.9" height="1.9"/><path d="M2.7 7.45h2.9"/></g></svg>
<svg style="left:153px;top:66.3px" width="10" height="11" viewBox="0 0 10 11"><g fill="#f4dcd8"><rect x=".6" y="1.6" width="3" height="2.8"/><rect x="5.4" y="1.6" width="3.2" height="2.8"/><rect x=".6" y="6.2" width="3" height="2.8"/><rect x="5.4" y="6.2" width="3.2" height="2.8"/></g><path d="M3.6 3h1.8M3.6 7.6h1.8" stroke="#f4dcd8" stroke-width=".8"/></svg>
<svg style="left:171px;top:66.3px" width="11" height="11" viewBox="0 0 11 11"><rect x="1.2" y="2.6" width="3.4" height="2.6" fill="#e0e0e0"/><rect x="5.6" y="2.6" width="3.6" height="2.6" fill="#e0e0e0"/><rect x="1.2" y="6" width="3.4" height="2.6" fill="#e4e4e4"/><rect x="5.6" y="6" width="3.6" height="2.6" fill="#e4e4e4"/></svg>
<div class="m" style="left:3.20px;transform-origin:0 50%;top:81px;font-size:7.5px;color:#222;transform:translateY(0.60px) scaleX(0.8310);">Test Setup</div>
<div class="m" style="left:46.80px;transform-origin:0 50%;top:80px;font-size:7.5px;color:#111;transform:translateY(0.30px) scaleX(0.8310);">Throughput</div>
<div class="m" style="left:91.60px;transform-origin:0 50%;top:81px;font-size:7.5px;color:#222;transform:translateY(0.60px) scaleX(0.8310);">Transaction Rate</div>
<div class="m" style="left:157.60px;transform-origin:0 50%;top:81px;font-size:7.5px;color:#222;transform:translateY(0.60px) scaleX(0.8310);">Response Time</div>
<div class="m" style="left:213.40px;transform-origin:0 50%;top:81px;font-size:7.5px;color:#222;transform:translateY(0.60px) scaleX(0.8310);">Raw Data Totals</div>
<div class="m" style="left:277.60px;transform-origin:0 50%;top:81px;font-size:7.5px;color:#222;transform:translateY(0.60px) scaleX(0.8310);">Endpoint Configuration</div>
<div class="m" style="left:2.60px;transform-origin:0 50%;top:103px;font-size:7.5px;color:#222;transform:translateY(0.00px) scaleX(0.8310);">Group</div>
<div class="m" style="left:89.60px;transform-origin:0 50%;top:95px;font-size:7.5px;color:#222;transform:translateY(0.80px) scaleX(0.8310);">Pair Group</div>
<div class="m" style="left:89.60px;transform-origin:0 50%;top:103px;font-size:7.5px;color:#222;transform:translateY(0.00px) scaleX(0.8310);">Name</div>
<div class="m" style="left:134.20px;transform-origin:0 50%;top:103px;font-size:7.5px;color:#222;transform:translateY(0.00px) scaleX(0.8310);">Run Status</div>
<div class="m" style="left:168.19px;width:65.01px;text-align:right;transform-origin:100% 50%;top:95px;font-size:7.5px;color:#222;transform:translateY(0.80px) scaleX(0.8310);">Timing Records</div>
<div class="m" style="left:190.69px;width:42.51px;text-align:right;transform-origin:100% 50%;top:103px;font-size:7.5px;color:#222;transform:translateY(0.00px) scaleX(0.8310);">Completed</div>
<div class="m" style="left:227.39px;width:65.01px;text-align:right;transform-origin:100% 50%;top:95px;font-size:7.5px;color:#222;transform:translateY(0.80px) scaleX(0.8310);">95% Confidence</div>
<div class="m" style="left:254.39px;width:38.01px;text-align:right;transform-origin:100% 50%;top:103px;font-size:7.5px;color:#222;transform:translateY(0.00px) scaleX(0.8310);">Interval</div>
<div class="m" style="left:292.89px;width:33.51px;text-align:right;transform-origin:100% 50%;top:95px;font-size:7.5px;color:#222;transform:translateY(0.80px) scaleX(0.8310);">Average</div>
<div class="m" style="left:296.40px;width:29.00px;text-align:right;transform-origin:100% 50%;top:103px;font-size:7.5px;color:#222;transform:translateY(0.00px) scaleX(0.8310);">(Mbps)</div>
<div class="m" style="left:326.49px;width:33.51px;text-align:right;transform-origin:100% 50%;top:95px;font-size:7.5px;color:#222;transform:translateY(0.80px) scaleX(0.8310);">Minimum</div>
<div class="m" style="left:330.00px;width:29.00px;text-align:right;transform-origin:100% 50%;top:103px;font-size:7.5px;color:#222;transform:translateY(0.00px) scaleX(0.8310);">(Mbps)</div>
<div class="m" style="left:359.89px;width:33.51px;text-align:right;transform-origin:100% 50%;top:95px;font-size:7.5px;color:#222;transform:translateY(0.80px) scaleX(0.8310);">Maximum</div>
<div class="m" style="left:363.40px;width:29.00px;text-align:right;transform-origin:100% 50%;top:103px;font-size:7.5px;color:#222;transform:translateY(0.00px) scaleX(0.8310);">(Mbps)</div>
<div class="m" style="left:399.59px;width:38.01px;text-align:right;transform-origin:100% 50%;top:95px;font-size:7.5px;color:#222;transform:translateY(0.80px) scaleX(0.8310);">Measured</div>
<div class="m" style="left:390.59px;width:47.01px;text-align:right;transform-origin:100% 50%;top:103px;font-size:7.5px;color:#222;transform:translateY(0.00px) scaleX(0.8310);">Time (sec)</div>
<div class="m" style="left:440.59px;width:38.01px;text-align:right;transform-origin:100% 50%;top:95px;font-size:7.5px;color:#222;transform:translateY(0.80px) scaleX(0.8310);">Relative</div>
<div class="m" style="left:436.09px;width:42.51px;text-align:right;transform-origin:100% 50%;top:103px;font-size:7.5px;color:#222;transform:translateY(0.00px) scaleX(0.8310);">Precision</div>
<svg style="left:17.3px;top:115.8px" width="8" height="8" viewBox="0 0 8 8"><rect x="1" y="1" width="5.4" height="5.4" fill="#f4f4f4" stroke="#2a2a3a" stroke-width=".9"/><path d="M2.4 3.7h2.6" stroke="#222" stroke-width=".9"/></svg>
<div class="m" style="left:30.00px;transform-origin:0 50%;top:115px;font-size:7.5px;color:#fff;font-weight:bold;transform:translateY(0.65px) scaleX(0.9498);">All Pairs</div>
<div class="m" style="left:217.90px;width:15.50px;text-align:right;transform-origin:100% 50%;top:115px;font-size:7.5px;color:#fff;font-weight:bold;transform:translateY(0.65px) scaleX(0.9498);">991</div>
<div class="m" style="left:293.89px;width:33.51px;text-align:right;transform-origin:100% 50%;top:115px;font-size:7.5px;color:#fff;font-weight:bold;transform:translateY(0.65px) scaleX(0.9498);">718.376</div>
<div class="m" style="left:331.80px;width:29.00px;text-align:right;transform-origin:100% 50%;top:115px;font-size:7.5px;color:#fff;font-weight:bold;transform:translateY(0.65px) scaleX(0.9498);">35.81<i>0</i></div>
<div class="m" style="left:365.00px;width:29.00px;text-align:right;transform-origin:100% 50%;top:115px;font-size:7.5px;color:#fff;font-weight:bold;transform:translateY(0.65px) scaleX(0.9498);">88.79<i>0</i></div>
<svg style="left:4.6px;top:126.30px" width="8" height="7.6" viewBox="0 0 8 7.6"><path d="M.3 7.2l1.4-5.4 1.4-.2v5.6z" fill="#10188a"/><rect x="2.9" y="1.2" width="2.3" height="6" fill="#e8c61e"/><rect x="5.1" y="1.5" width="2.3" height="5.7" fill="#b82a18"/><circle cx="3.6" cy=".9" r=".8" fill="#8a7a5a"/><circle cx="5.8" cy="1" r=".8" fill="#7a4a3a"/><path d="M2 1.6l.8-.9" stroke="#1a1a3a" stroke-width=".7"/></svg>
<div class="m" style="left:59.60px;transform-origin:0 50%;top:125px;font-size:7.5px;color:#e8f2fc;transform:translateY(0.60px) scaleX(0.8310);">Pair 6</div>
<div class="m" style="left:89.60px;transform-origin:0 50%;top:125px;font-size:7.5px;color:#e8f2fc;transform:translateY(0.60px) scaleX(0.8310);">No Group</div>
<div class="m" style="left:134.00px;transform-origin:0 50%;top:125px;font-size:7.5px;color:#e8f2fc;transform:translateY(0.60px) scaleX(0.8310);">Finished</div>
<div class="m" style="left:217.70px;width:15.50px;text-align:right;transform-origin:100% 50%;top:125px;font-size:7.5px;color:#e8f2fc;transform:translateY(0.60px) scaleX(0.8310);">1<i>0</i><i>0</i></div>
<div class="m" style="left:237.60px;transform-origin:0 50%;top:125px;font-size:7.5px;color:#e8f2fc;transform:translateY(0.60px) scaleX(0.8310);">-2.895 : +2.895</div>
<div class="m" style="left:297.40px;width:29.00px;text-align:right;transform-origin:100% 50%;top:125px;font-size:7.5px;color:#e8f2fc;transform:translateY(0.60px) scaleX(0.8310);">72.525</div>
<div class="m" style="left:331.00px;width:29.00px;text-align:right;transform-origin:100% 50%;top:125px;font-size:7.5px;color:#e8f2fc;transform:translateY(0.60px) scaleX(0.8310);">36.48<i>0</i></div>
<div class="m" style="left:364.40px;width:29.00px;text-align:right;transform-origin:100% 50%;top:125px;font-size:7.5px;color:#e8f2fc;transform:translateY(0.60px) scaleX(0.8310);">86.498</div>
<div class="m" style="left:403.89px;width:33.51px;text-align:right;transform-origin:100% 50%;top:125px;font-size:7.5px;color:#e8f2fc;transform:translateY(0.60px) scaleX(0.8310);">11<i>0</i>.3<i>0</i>7</div>
<div class="m" style="left:454.30px;width:24.50px;text-align:right;transform-origin:100% 50%;top:125px;font-size:7.5px;color:#e8f2fc;transform:translateY(0.60px) scaleX(0.8310);">3.992</div>
<svg style="left:4.6px;top:136.20px" width="8" height="7.6" viewBox="0 0 8 7.6"><path d="M.3 7.2l1.4-5.4 1.4-.2v5.6z" fill="#10188a"/><rect x="2.9" y="1.2" width="2.3" height="6" fill="#e8c61e"/><rect x="5.1" y="1.5" width="2.3" height="5.7" fill="#b82a18"/><circle cx="3.6" cy=".9" r=".8" fill="#8a7a5a"/><circle cx="5.8" cy="1" r=".8" fill="#7a4a3a"/><path d="M2 1.6l.8-.9" stroke="#1a1a3a" stroke-width=".7"/></svg>
<div class="m" style="left:59.60px;transform-origin:0 50%;top:135px;font-size:7.5px;color:#e8f2fc;transform:translateY(0.50px) scaleX(0.8310);">Pair 7</div>
<div class="m" style="left:89.60px;transform-origin:0 50%;top:135px;font-size:7.5px;color:#e8f2fc;transform:translateY(0.50px) scaleX(0.8310);">No Group</div>
<div class="m" style="left:134.00px;transform-origin:0 50%;top:135px;font-size:7.5px;color:#e8f2fc;transform:translateY(0.50px) scaleX(0.8310);">Finished</div>
<div class="m" style="left:222.20px;width:11.00px;text-align:right;transform-origin:100% 50%;top:135px;font-size:7.5px;color:#e8f2fc;transform:translateY(0.50px) scaleX(0.8310);">99</div>
<div class="m" style="left:237.60px;transform-origin:0 50%;top:135px;font-size:7.5px;color:#e8f2fc;transform:translateY(0.50px) scaleX(0.8310);">-2.932 : +2.932</div>
<div class="m" style="left:297.40px;width:29.00px;text-align:right;transform-origin:100% 50%;top:135px;font-size:7.5px;color:#e8f2fc;transform:translateY(0.50px) scaleX(0.8310);">72.349</div>
<div class="m" style="left:331.00px;width:29.00px;text-align:right;transform-origin:100% 50%;top:135px;font-size:7.5px;color:#e8f2fc;transform:translateY(0.50px) scaleX(0.8310);">36.166</div>
<div class="m" style="left:364.40px;width:29.00px;text-align:right;transform-origin:100% 50%;top:135px;font-size:7.5px;color:#e8f2fc;transform:translateY(0.50px) scaleX(0.8310);">87.336</div>
<div class="m" style="left:403.89px;width:33.51px;text-align:right;transform-origin:100% 50%;top:135px;font-size:7.5px;color:#e8f2fc;transform:translateY(0.50px) scaleX(0.8310);">1<i>0</i>9.47<i>0</i></div>
<div class="m" style="left:454.30px;width:24.50px;text-align:right;transform-origin:100% 50%;top:135px;font-size:7.5px;color:#e8f2fc;transform:translateY(0.50px) scaleX(0.8310);">4.<i>0</i>52</div>
<svg style="left:4.6px;top:146.10px" width="8" height="7.6" viewBox="0 0 8 7.6"><path d="M.3 7.2l1.4-5.4 1.4-.2v5.6z" fill="#10188a"/><rect x="2.9" y="1.2" width="2.3" height="6" fill="#e8c61e"/><rect x="5.1" y="1.5" width="2.3" height="5.7" fill="#b82a18"/><circle cx="3.6" cy=".9" r=".8" fill="#8a7a5a"/><circle cx="5.8" cy="1" r=".8" fill="#7a4a3a"/><path d="M2 1.6l.8-.9" stroke="#1a1a3a" stroke-width=".7"/></svg>
<div class="m" style="left:59.60px;transform-origin:0 50%;top:145px;font-size:7.5px;color:#e8f2fc;transform:translateY(0.40px) scaleX(0.8310);">Pair 8</div>
<div class="m" style="left:89.60px;transform-origin:0 50%;top:145px;font-size:7.5px;color:#e8f2fc;transform:translateY(0.40px) scaleX(0.8310);">No Group</div>
<div class="m" style="left:134.00px;transform-origin:0 50%;top:145px;font-size:7.5px;color:#e8f2fc;transform:translateY(0.40px) scaleX(0.8310);">Finished</div>
<div class="m" style="left:222.20px;width:11.00px;text-align:right;transform-origin:100% 50%;top:145px;font-size:7.5px;color:#e8f2fc;transform:translateY(0.40px) scaleX(0.8310);">99</div>
<div class="m" style="left:237.60px;transform-origin:0 50%;top:145px;font-size:7.5px;color:#e8f2fc;transform:translateY(0.40px) scaleX(0.8310);">-2.965 : +2.965</div>
<div class="m" style="left:297.40px;width:29.00px;text-align:right;transform-origin:100% 50%;top:145px;font-size:7.5px;color:#e8f2fc;transform:translateY(0.40px) scaleX(0.8310);">72.24<i>0</i></div>
<div class="m" style="left:331.00px;width:29.00px;text-align:right;transform-origin:100% 50%;top:145px;font-size:7.5px;color:#e8f2fc;transform:translateY(0.40px) scaleX(0.8310);">36.53<i>0</i></div>
<div class="m" style="left:364.40px;width:29.00px;text-align:right;transform-origin:100% 50%;top:145px;font-size:7.5px;color:#e8f2fc;transform:translateY(0.40px) scaleX(0.8310);">88.79<i>0</i></div>
<div class="m" style="left:403.89px;width:33.51px;text-align:right;transform-origin:100% 50%;top:145px;font-size:7.5px;color:#e8f2fc;transform:translateY(0.40px) scaleX(0.8310);">1<i>0</i>9.634</div>
<div class="m" style="left:454.30px;width:24.50px;text-align:right;transform-origin:100% 50%;top:145px;font-size:7.5px;color:#e8f2fc;transform:translateY(0.40px) scaleX(0.8310);">4.1<i>0</i>4</div>
<svg style="left:4.6px;top:156.00px" width="8" height="7.6" viewBox="0 0 8 7.6"><path d="M.3 7.2l1.4-5.4 1.4-.2v5.6z" fill="#10188a"/><rect x="2.9" y="1.2" width="2.3" height="6" fill="#e8c61e"/><rect x="5.1" y="1.5" width="2.3" height="5.7" fill="#b82a18"/><circle cx="3.6" cy=".9" r=".8" fill="#8a7a5a"/><circle cx="5.8" cy="1" r=".8" fill="#7a4a3a"/><path d="M2 1.6l.8-.9" stroke="#1a1a3a" stroke-width=".7"/></svg>
<div class="m" style="left:59.60px;transform-origin:0 50%;top:155px;font-size:7.5px;color:#e8f2fc;transform:translateY(0.30px) scaleX(0.8310);">Pair 9</div>
<div class="m" style="left:89.60px;transform-origin:0 50%;top:155px;font-size:7.5px;color:#e8f2fc;transform:translateY(0.30px) scaleX(0.8310);">No Group</div>
<div class="m" style="left:134.00px;transform-origin:0 50%;top:155px;font-size:7.5px;color:#e8f2fc;transform:translateY(0.30px) scaleX(0.8310);">Finished</div>
<div class="m" style="left:222.20px;width:11.00px;text-align:right;transform-origin:100% 50%;top:155px;font-size:7.5px;color:#e8f2fc;transform:translateY(0.30px) scaleX(0.8310);">99</div>
<div class="m" style="left:237.60px;transform-origin:0 50%;top:155px;font-size:7.5px;color:#e8f2fc;transform:translateY(0.30px) scaleX(0.8310);">-2.957 : +2.957</div>
<div class="m" style="left:297.40px;width:29.00px;text-align:right;transform-origin:100% 50%;top:155px;font-size:7.5px;color:#e8f2fc;transform:translateY(0.30px) scaleX(0.8310);">72.<i>0</i>39</div>
<div class="m" style="left:331.00px;width:29.00px;text-align:right;transform-origin:100% 50%;top:155px;font-size:7.5px;color:#e8f2fc;transform:translateY(0.30px) scaleX(0.8310);">36.134</div>
<div class="m" style="left:364.40px;width:29.00px;text-align:right;transform-origin:100% 50%;top:155px;font-size:7.5px;color:#e8f2fc;transform:translateY(0.30px) scaleX(0.8310);">88.2<i>0</i>3</div>
<div class="m" style="left:403.89px;width:33.51px;text-align:right;transform-origin:100% 50%;top:155px;font-size:7.5px;color:#e8f2fc;transform:translateY(0.30px) scaleX(0.8310);">1<i>0</i>9.941</div>
<div class="m" style="left:454.30px;width:24.50px;text-align:right;transform-origin:100% 50%;top:155px;font-size:7.5px;color:#e8f2fc;transform:translateY(0.30px) scaleX(0.8310);">4.1<i>0</i>5</div>
<svg style="left:4.6px;top:165.90px" width="8" height="7.6" viewBox="0 0 8 7.6"><path d="M.3 7.2l1.4-5.4 1.4-.2v5.6z" fill="#10188a"/><rect x="2.9" y="1.2" width="2.3" height="6" fill="#e8c61e"/><rect x="5.1" y="1.5" width="2.3" height="5.7" fill="#b82a18"/><circle cx="3.6" cy=".9" r=".8" fill="#8a7a5a"/><circle cx="5.8" cy="1" r=".8" fill="#7a4a3a"/><path d="M2 1.6l.8-.9" stroke="#1a1a3a" stroke-width=".7"/></svg>
<div class="m" style="left:59.60px;transform-origin:0 50%;top:165px;font-size:7.5px;color:#e8f2fc;transform:translateY(0.20px) scaleX(0.8310);">Pair 1<i>0</i></div>
<div class="m" style="left:89.60px;transform-origin:0 50%;top:165px;font-size:7.5px;color:#e8f2fc;transform:translateY(0.20px) scaleX(0.8310);">No Group</div>
<div class="m" style="left:134.00px;transform-origin:0 50%;top:165px;font-size:7.5px;color:#e8f2fc;transform:translateY(0.20px) scaleX(0.8310);">Finished</div>
<div class="m" style="left:222.20px;width:11.00px;text-align:right;transform-origin:100% 50%;top:165px;font-size:7.5px;color:#e8f2fc;transform:translateY(0.20px) scaleX(0.8310);">99</div>
<div class="m" style="left:237.60px;transform-origin:0 50%;top:165px;font-size:7.5px;color:#e8f2fc;transform:translateY(0.20px) scaleX(0.8310);">-2.912 : +2.912</div>
<div class="m" style="left:297.40px;width:29.00px;text-align:right;transform-origin:100% 50%;top:165px;font-size:7.5px;color:#e8f2fc;transform:translateY(0.20px) scaleX(0.8310);">71.962</div>
<div class="m" style="left:331.00px;width:29.00px;text-align:right;transform-origin:100% 50%;top:165px;font-size:7.5px;color:#e8f2fc;transform:translateY(0.20px) scaleX(0.8310);">35.81<i>0</i></div>
<div class="m" style="left:364.40px;width:29.00px;text-align:right;transform-origin:100% 50%;top:165px;font-size:7.5px;color:#e8f2fc;transform:translateY(0.20px) scaleX(0.8310);">85.562</div>
<div class="m" style="left:403.89px;width:33.51px;text-align:right;transform-origin:100% 50%;top:165px;font-size:7.5px;color:#e8f2fc;transform:translateY(0.20px) scaleX(0.8310);">11<i>0</i>.<i>0</i>88</div>
<div class="m" style="left:454.30px;width:24.50px;text-align:right;transform-origin:100% 50%;top:165px;font-size:7.5px;color:#e8f2fc;transform:translateY(0.20px) scaleX(0.8310);">4.<i>0</i>46</div>
<svg style="left:4.6px;top:175.80px" width="8" height="7.6" viewBox="0 0 8 7.6"><path d="M.3 7.2l1.4-5.4 1.4-.2v5.6z" fill="#10188a"/><rect x="2.9" y="1.2" width="2.3" height="6" fill="#e8c61e"/><rect x="5.1" y="1.5" width="2.3" height="5.7" fill="#b82a18"/><circle cx="3.6" cy=".9" r=".8" fill="#8a7a5a"/><circle cx="5.8" cy="1" r=".8" fill="#7a4a3a"/><path d="M2 1.6l.8-.9" stroke="#1a1a3a" stroke-width=".7"/></svg>
<div class="m" style="left:59.60px;transform-origin:0 50%;top:175px;font-size:7.5px;color:#e8f2fc;transform:translateY(0.10px) scaleX(0.8310);">Pair 11</div>
<div class="m" style="left:89.60px;transform-origin:0 50%;top:175px;font-size:7.5px;color:#e8f2fc;transform:translateY(0.10px) scaleX(0.8310);">No Group</div>
<div class="m" style="left:134.00px;transform-origin:0 50%;top:175px;font-size:7.5px;color:#e8f2fc;transform:translateY(0.10px) scaleX(0.8310);">Finished</div>
<div class="m" style="left:222.20px;width:11.00px;text-align:right;transform-origin:100% 50%;top:175px;font-size:7.5px;color:#e8f2fc;transform:translateY(0.10px) scaleX(0.8310);">99</div>
<div class="m" style="left:237.60px;transform-origin:0 50%;top:175px;font-size:7.5px;color:#e8f2fc;transform:translateY(0.10px) scaleX(0.8310);">-2.996 : +2.996</div>
<div class="m" style="left:297.40px;width:29.00px;text-align:right;transform-origin:100% 50%;top:175px;font-size:7.5px;color:#e8f2fc;transform:translateY(0.10px) scaleX(0.8310);">72.167</div>
<div class="m" style="left:331.00px;width:29.00px;text-align:right;transform-origin:100% 50%;top:175px;font-size:7.5px;color:#e8f2fc;transform:translateY(0.10px) scaleX(0.8310);">36.<i>0</i>85</div>
<div class="m" style="left:364.40px;width:29.00px;text-align:right;transform-origin:100% 50%;top:175px;font-size:7.5px;color:#e8f2fc;transform:translateY(0.10px) scaleX(0.8310);">84.299</div>
<div class="m" style="left:403.89px;width:33.51px;text-align:right;transform-origin:100% 50%;top:175px;font-size:7.5px;color:#e8f2fc;transform:translateY(0.10px) scaleX(0.8310);">1<i>0</i>9.746</div>
<div class="m" style="left:454.30px;width:24.50px;text-align:right;transform-origin:100% 50%;top:175px;font-size:7.5px;color:#e8f2fc;transform:translateY(0.10px) scaleX(0.8310);">4.152</div>
<svg style="left:4.6px;top:185.70px" width="8" height="7.6" viewBox="0 0 8 7.6"><path d="M.3 7.2l1.4-5.4 1.4-.2v5.6z" fill="#10188a"/><rect x="2.9" y="1.2" width="2.3" height="6" fill="#e8c61e"/><rect x="5.1" y="1.5" width="2.3" height="5.7" fill="#b82a18"/><circle cx="3.6" cy=".9" r=".8" fill="#8a7a5a"/><circle cx="5.8" cy="1" r=".8" fill="#7a4a3a"/><path d="M2 1.6l.8-.9" stroke="#1a1a3a" stroke-width=".7"/></svg>
<div class="m" style="left:59.60px;transform-origin:0 50%;top:185px;font-size:7.5px;color:#e8f2fc;transform:translateY(0.00px) scaleX(0.8310);">Pair 12</div>
<div class="m" style="left:89.60px;transform-origin:0 50%;top:185px;font-size:7.5px;color:#e8f2fc;transform:translateY(0.00px) scaleX(0.8310);">No Group</div>
<div class="m" style="left:134.00px;transform-origin:0 50%;top:185px;font-size:7.5px;color:#e8f2fc;transform:translateY(0.00px) scaleX(0.8310);">Finished</div>
<div class="m" style="left:222.20px;width:11.00px;text-align:right;transform-origin:100% 50%;top:185px;font-size:7.5px;color:#e8f2fc;transform:translateY(0.00px) scaleX(0.8310);">99</div>
<div class="m" style="left:237.60px;transform-origin:0 50%;top:185px;font-size:7.5px;color:#e8f2fc;transform:translateY(0.00px) scaleX(0.8310);">-2.9<i>0</i>7 : +2.9<i>0</i>7</div>
<div class="m" style="left:297.40px;width:29.00px;text-align:right;transform-origin:100% 50%;top:185px;font-size:7.5px;color:#e8f2fc;transform:translateY(0.00px) scaleX(0.8310);">71.942</div>
<div class="m" style="left:331.00px;width:29.00px;text-align:right;transform-origin:100% 50%;top:185px;font-size:7.5px;color:#e8f2fc;transform:translateY(0.00px) scaleX(0.8310);">36.513</div>
<div class="m" style="left:364.40px;width:29.00px;text-align:right;transform-origin:100% 50%;top:185px;font-size:7.5px;color:#e8f2fc;transform:translateY(0.00px) scaleX(0.8310);">86.768</div>
<div class="m" style="left:403.89px;width:33.51px;text-align:right;transform-origin:100% 50%;top:185px;font-size:7.5px;color:#e8f2fc;transform:translateY(0.00px) scaleX(0.8310);">11<i>0</i>.<i>0</i>88</div>
<div class="m" style="left:454.30px;width:24.50px;text-align:right;transform-origin:100% 50%;top:185px;font-size:7.5px;color:#e8f2fc;transform:translateY(0.00px) scaleX(0.8310);">4.<i>0</i>4<i>0</i></div>
<svg style="left:4.6px;top:195.60px" width="8" height="7.6" viewBox="0 0 8 7.6"><path d="M.3 7.2l1.4-5.4 1.4-.2v5.6z" fill="#10188a"/><rect x="2.9" y="1.2" width="2.3" height="6" fill="#e8c61e"/><rect x="5.1" y="1.5" width="2.3" height="5.7" fill="#b82a18"/><circle cx="3.6" cy=".9" r=".8" fill="#8a7a5a"/><circle cx="5.8" cy="1" r=".8" fill="#7a4a3a"/><path d="M2 1.6l.8-.9" stroke="#1a1a3a" stroke-width=".7"/></svg>
<div class="m" style="left:59.60px;transform-origin:0 50%;top:194px;font-size:7.5px;color:#e8f2fc;transform:translateY(0.90px) scaleX(0.8310);">Pair 13</div>
<div class="m" style="left:89.60px;transform-origin:0 50%;top:194px;font-size:7.5px;color:#e8f2fc;transform:translateY(0.90px) scaleX(0.8310);">No Group</div>
<div class="m" style="left:134.00px;transform-origin:0 50%;top:194px;font-size:7.5px;color:#e8f2fc;transform:translateY(0.90px) scaleX(0.8310);">Finished</div>
<div class="m" style="left:222.20px;width:11.00px;text-align:right;transform-origin:100% 50%;top:194px;font-size:7.5px;color:#e8f2fc;transform:translateY(0.90px) scaleX(0.8310);">99</div>
<div class="m" style="left:237.60px;transform-origin:0 50%;top:194px;font-size:7.5px;color:#e8f2fc;transform:translateY(0.90px) scaleX(0.8310);">-2.863 : +2.863</div>
<div class="m" style="left:297.40px;width:29.00px;text-align:right;transform-origin:100% 50%;top:194px;font-size:7.5px;color:#e8f2fc;transform:translateY(0.90px) scaleX(0.8310);">71.926</div>
<div class="m" style="left:331.00px;width:29.00px;text-align:right;transform-origin:100% 50%;top:194px;font-size:7.5px;color:#e8f2fc;transform:translateY(0.90px) scaleX(0.8310);">36.496</div>
<div class="m" style="left:364.40px;width:29.00px;text-align:right;transform-origin:100% 50%;top:194px;font-size:7.5px;color:#e8f2fc;transform:translateY(0.90px) scaleX(0.8310);">87.719</div>
<div class="m" style="left:403.89px;width:33.51px;text-align:right;transform-origin:100% 50%;top:194px;font-size:7.5px;color:#e8f2fc;transform:translateY(0.90px) scaleX(0.8310);">11<i>0</i>.113</div>
<div class="m" style="left:454.30px;width:24.50px;text-align:right;transform-origin:100% 50%;top:194px;font-size:7.5px;color:#e8f2fc;transform:translateY(0.90px) scaleX(0.8310);">3.98<i>0</i></div>
<svg style="left:4.6px;top:205.50px" width="8" height="7.6" viewBox="0 0 8 7.6"><path d="M.3 7.2l1.4-5.4 1.4-.2v5.6z" fill="#10188a"/><rect x="2.9" y="1.2" width="2.3" height="6" fill="#e8c61e"/><rect x="5.1" y="1.5" width="2.3" height="5.7" fill="#b82a18"/><circle cx="3.6" cy=".9" r=".8" fill="#8a7a5a"/><circle cx="5.8" cy="1" r=".8" fill="#7a4a3a"/><path d="M2 1.6l.8-.9" stroke="#1a1a3a" stroke-width=".7"/></svg>
<div class="m" style="left:59.60px;transform-origin:0 50%;top:204px;font-size:7.5px;color:#e8f2fc;transform:translateY(0.80px) scaleX(0.8310);">Pair 14</div>
<div class="m" style="left:89.60px;transform-origin:0 50%;top:204px;font-size:7.5px;color:#e8f2fc;transform:translateY(0.80px) scaleX(0.8310);">No Group</div>
<div class="m" style="left:134.00px;transform-origin:0 50%;top:204px;font-size:7.5px;color:#e8f2fc;transform:translateY(0.80px) scaleX(0.8310);">Finished</div>
<div class="m" style="left:222.20px;width:11.00px;text-align:right;transform-origin:100% 50%;top:204px;font-size:7.5px;color:#e8f2fc;transform:translateY(0.80px) scaleX(0.8310);">99</div>
<div class="m" style="left:237.60px;transform-origin:0 50%;top:204px;font-size:7.5px;color:#e8f2fc;transform:translateY(0.80px) scaleX(0.8310);">-2.894 : +2.894</div>
<div class="m" style="left:297.40px;width:29.00px;text-align:right;transform-origin:100% 50%;top:204px;font-size:7.5px;color:#e8f2fc;transform:translateY(0.80px) scaleX(0.8310);">72.273</div>
<div class="m" style="left:331.00px;width:29.00px;text-align:right;transform-origin:100% 50%;top:204px;font-size:7.5px;color:#e8f2fc;transform:translateY(0.80px) scaleX(0.8310);">36.782</div>
<div class="m" style="left:364.40px;width:29.00px;text-align:right;transform-origin:100% 50%;top:204px;font-size:7.5px;color:#e8f2fc;transform:translateY(0.80px) scaleX(0.8310);">86.498</div>
<div class="m" style="left:403.89px;width:33.51px;text-align:right;transform-origin:100% 50%;top:204px;font-size:7.5px;color:#e8f2fc;transform:translateY(0.80px) scaleX(0.8310);">1<i>0</i>9.584</div>
<div class="m" style="left:454.30px;width:24.50px;text-align:right;transform-origin:100% 50%;top:204px;font-size:7.5px;color:#e8f2fc;transform:translateY(0.80px) scaleX(0.8310);">4.<i>0</i><i>0</i>4</div>
<svg style="left:4.6px;top:215.40px" width="8" height="7.6" viewBox="0 0 8 7.6"><path d="M.3 7.2l1.4-5.4 1.4-.2v5.6z" fill="#10188a"/><rect x="2.9" y="1.2" width="2.3" height="6" fill="#e8c61e"/><rect x="5.1" y="1.5" width="2.3" height="5.7" fill="#b82a18"/><circle cx="3.6" cy=".9" r=".8" fill="#8a7a5a"/><circle cx="5.8" cy="1" r=".8" fill="#7a4a3a"/><path d="M2 1.6l.8-.9" stroke="#1a1a3a" stroke-width=".7"/></svg>
<div class="m" style="left:59.60px;transform-origin:0 50%;top:214px;font-size:7.5px;color:#e8f2fc;transform:translateY(0.70px) scaleX(0.8310);">Pair 15</div>
<div class="m" style="left:89.60px;transform-origin:0 50%;top:214px;font-size:7.5px;color:#e8f2fc;transform:translateY(0.70px) scaleX(0.8310);">No Group</div>
<div class="m" style="left:134.00px;transform-origin:0 50%;top:214px;font-size:7.5px;color:#e8f2fc;transform:translateY(0.70px) scaleX(0.8310);">Finished</div>
<div class="m" style="left:222.20px;width:11.00px;text-align:right;transform-origin:100% 50%;top:214px;font-size:7.5px;color:#e8f2fc;transform:translateY(0.70px) scaleX(0.8310);">99</div>
<div class="m" style="left:237.60px;transform-origin:0 50%;top:214px;font-size:7.5px;color:#e8f2fc;transform:translateY(0.70px) scaleX(0.8310);">-2.923 : +2.923</div>
<div class="m" style="left:297.40px;width:29.00px;text-align:right;transform-origin:100% 50%;top:214px;font-size:7.5px;color:#e8f2fc;transform:translateY(0.70px) scaleX(0.8310);">71.917</div>
<div class="m" style="left:331.00px;width:29.00px;text-align:right;transform-origin:100% 50%;top:214px;font-size:7.5px;color:#e8f2fc;transform:translateY(0.70px) scaleX(0.8310);">36.134</div>
<div class="m" style="left:364.40px;width:29.00px;text-align:right;transform-origin:100% 50%;top:214px;font-size:7.5px;color:#e8f2fc;transform:translateY(0.70px) scaleX(0.8310);">86.498</div>
<div class="m" style="left:403.89px;width:33.51px;text-align:right;transform-origin:100% 50%;top:214px;font-size:7.5px;color:#e8f2fc;transform:translateY(0.70px) scaleX(0.8310);">11<i>0</i>.127</div>
<div class="m" style="left:454.30px;width:24.50px;text-align:right;transform-origin:100% 50%;top:214px;font-size:7.5px;color:#e8f2fc;transform:translateY(0.70px) scaleX(0.8310);">4.<i>0</i>64</div>
<svg style="left:1014px;top:93px" width="10" height="210" viewBox="0 0 10 210"><path d="M3 8.6l2.2-2.4 2.2 2.4" fill="none" stroke="#a6a6a6" stroke-width=".9"/><path d="M3 201.4l2.2 2.4 2.2-2.4" fill="none" stroke="#a6a6a6" stroke-width=".9"/></svg>
<svg style="left:0px;top:302px" width="1014" height="10" viewBox="0 0 1014 10"><path d="M6.6 2.8l-2.4 2.3 2.4 2.3" fill="none" stroke="#a6a6a6" stroke-width=".9"/><path d="M1005.8 2.8l2.4 2.3-2.4 2.3" fill="none" stroke="#a6a6a6" stroke-width=".9"/></svg>
<div class="m" style="left:7.20px;transform-origin:0 50%;top:324px;font-size:12.4px;color:#333;transform:translateY(0.30px) scaleX(0.8063);line-height:14px;height:14px;margin-top:-2px;">Throughput</div>
<div class="m" style="left:6.68px;width:27.92px;text-align:right;transform-origin:100% 50%;top:336px;font-size:7.2px;color:#4a4a4a;transform:translateY(0.00px) scaleX(0.8332);">91.7<i>0</i><i>0</i></div>
<div class="m" style="left:6.68px;width:27.92px;text-align:right;transform-origin:100% 50%;top:361px;font-size:7.2px;color:#4a4a4a;transform:translateY(0.93px) scaleX(0.8332);">85.<i>0</i><i>0</i><i>0</i></div>
<div class="m" style="left:6.68px;width:27.92px;text-align:right;transform-origin:100% 50%;top:400px;font-size:7.2px;color:#4a4a4a;transform:translateY(0.62px) scaleX(0.8332);">75.<i>0</i><i>0</i><i>0</i></div>
<div class="m" style="left:6.68px;width:27.92px;text-align:right;transform-origin:100% 50%;top:439px;font-size:7.2px;color:#4a4a4a;transform:translateY(0.32px) scaleX(0.8332);">65.<i>0</i><i>0</i><i>0</i></div>
<div class="m" style="left:6.68px;width:27.92px;text-align:right;transform-origin:100% 50%;top:478px;font-size:7.2px;color:#4a4a4a;transform:translateY(0.01px) scaleX(0.8332);">55.<i>0</i><i>0</i><i>0</i></div>
<div class="m" style="left:6.68px;width:27.92px;text-align:right;transform-origin:100% 50%;top:516px;font-size:7.2px;color:#4a4a4a;transform:translateY(0.71px) scaleX(0.8332);">45.<i>0</i><i>0</i><i>0</i></div>
<div class="m" style="left:6.68px;width:27.92px;text-align:right;transform-origin:100% 50%;top:555px;font-size:7.2px;color:#4a4a4a;transform:translateY(0.40px) scaleX(0.8332);">35.<i>0</i><i>0</i><i>0</i></div>
<div class="m" style="left:28.00px;transform-origin:0 50%;top:561px;font-size:7.2px;color:#4a4a4a;transform:translateY(0.80px) scaleX(0.8610);"><i>0</i>:<i>0</i><i>0</i>:<i>0</i><i>0</i></div>
<div class="m" style="left:90.66px;transform-origin:0 50%;top:561px;font-size:7.2px;color:#4a4a4a;transform:translateY(0.80px) scaleX(0.8610);"><i>0</i>:<i>0</i><i>0</i>:1<i>0</i></div>
<div class="m" style="left:153.32px;transform-origin:0 50%;top:561px;font-size:7.2px;color:#4a4a4a;transform:translateY(0.80px) scaleX(0.8610);"><i>0</i>:<i>0</i><i>0</i>:2<i>0</i></div>
<div class="m" style="left:215.97px;transform-origin:0 50%;top:561px;font-size:7.2px;color:#4a4a4a;transform:translateY(0.80px) scaleX(0.8610);"><i>0</i>:<i>0</i><i>0</i>:3<i>0</i></div>
<div class="m" style="left:278.63px;transform-origin:0 50%;top:561px;font-size:7.2px;color:#4a4a4a;transform:translateY(0.80px) scaleX(0.8610);"><i>0</i>:<i>0</i><i>0</i>:4<i>0</i></div>
<div class="m" style="left:341.29px;transform-origin:0 50%;top:561px;font-size:7.2px;color:#4a4a4a;transform:translateY(0.80px) scaleX(0.8610);"><i>0</i>:<i>0</i><i>0</i>:5<i>0</i></div>
<div class="m" style="left:403.95px;transform-origin:0 50%;top:561px;font-size:7.2px;color:#4a4a4a;transform:translateY(0.80px) scaleX(0.8610);"><i>0</i>:<i>0</i>1:<i>0</i><i>0</i></div>
<div class="m" style="left:466.61px;transform-origin:0 50%;top:561px;font-size:7.2px;color:#4a4a4a;transform:translateY(0.80px) scaleX(0.8610);"><i>0</i>:<i>0</i>1:1<i>0</i></div>
<div class="m" style="left:529.27px;transform-origin:0 50%;top:561px;font-size:7.2px;color:#4a4a4a;transform:translateY(0.80px) scaleX(0.8610);"><i>0</i>:<i>0</i>1:2<i>0</i></div>
<div class="m" style="left:591.92px;transform-origin:0 50%;top:561px;font-size:7.2px;color:#4a4a4a;transform:translateY(0.80px) scaleX(0.8610);"><i>0</i>:<i>0</i>1:3<i>0</i></div>
<div class="m" style="left:654.58px;transform-origin:0 50%;top:561px;font-size:7.2px;color:#4a4a4a;transform:translateY(0.80px) scaleX(0.8610);"><i>0</i>:<i>0</i>1:4<i>0</i></div>
<div class="m" style="left:717.24px;transform-origin:0 50%;top:561px;font-size:7.2px;color:#4a4a4a;transform:translateY(0.80px) scaleX(0.8610);"><i>0</i>:<i>0</i>1:5<i>0</i></div>
<div class="m" style="left:779.90px;transform-origin:0 50%;top:561px;font-size:7.2px;color:#4a4a4a;transform:translateY(0.80px) scaleX(0.8610);"><i>0</i>:<i>0</i>2:<i>0</i><i>0</i></div>
<div class="m" style="left:369.50px;transform-origin:0 50%;top:574px;font-size:7.5px;color:#111;font-weight:bold;transform:translateY(0.20px) scaleX(0.9443);">Elapsed time (h:mm:ss)</div>
<div class="m" style="left:-12px;top:445.6px;width:40px;text-align:center;font-size:7.5px;font-weight:bold;color:#111;transform:rotate(-90deg) scaleX(.93);transform-origin:50% 50%;">Mbps</div>
<div class="s" style="left:820.5px;top:320.0px;width:204px;text-align:center;font-size:8.4px;line-height:11px;font-weight:bold;color:#111;">Legend</div>
<svg style="left:1015px;top:332px" width="10" height="244" viewBox="0 0 10 244"><path d="M2.6 8l2.2-2.4L7 8" fill="none" stroke="#a6a6a6" stroke-width=".9"/><path d="M2.6 236l2.2 2.4L7 236" fill="none" stroke="#a6a6a6" stroke-width=".9"/></svg>
<svg style="left:821px;top:575px" width="200" height="12" viewBox="0 0 200 12"><path d="M6.6 3.6l-2.4 2.3 2.4 2.3" fill="none" stroke="#a6a6a6" stroke-width=".9"/><path d="M186 3.6l2.4 2.3-2.4 2.3" fill="none" stroke="#a6a6a6" stroke-width=".9"/></svg>
<div class="m" style="left:840.00px;transform-origin:0 50%;top:330px;font-size:7.3px;color:#b4b45c;transform:translateY(0.50px) scaleX(0.8537);">Pair 6 -- <span style="font-size:6.7px">上行</span></div>
<div class="m" style="left:840.00px;transform-origin:0 50%;top:337px;font-size:7.3px;color:#d9bd4c;transform:translateY(0.26px) scaleX(0.8537);">Pair 7 -- <span style="font-size:6.7px">上行</span></div>
<div class="m" style="left:840.00px;transform-origin:0 50%;top:344px;font-size:7.3px;color:#2a2ac8;font-weight:bold;transform:translateY(0.02px) scaleX(0.8537);">Pair 8 -- <span style="font-size:6.7px">上行</span></div>
<div class="m" style="left:840.00px;transform-origin:0 50%;top:350px;font-size:7.3px;color:#b2c862;transform:translateY(0.78px) scaleX(0.8537);">Pair 9 -- <span style="font-size:6.7px">上行</span></div>
<div class="m" style="left:840.00px;transform-origin:0 50%;top:357px;font-size:7.3px;color:#9a55cc;transform:translateY(0.54px) scaleX(0.8537);">Pair 1<i>0</i> -- <span style="font-size:6.7px">上行</span></div>
<div class="m" style="left:840.00px;transform-origin:0 50%;top:364px;font-size:7.3px;color:#3cb03c;transform:translateY(0.30px) scaleX(0.8537);">Pair 11 -- <span style="font-size:6.7px">上行</span></div>
<div class="m" style="left:840.00px;transform-origin:0 50%;top:371px;font-size:7.3px;color:#d0408a;transform:translateY(0.06px) scaleX(0.8537);">Pair 12 -- <span style="font-size:6.7px">上行</span></div>
<div class="m" style="left:840.00px;transform-origin:0 50%;top:377px;font-size:7.3px;color:#3cb09c;transform:translateY(0.82px) scaleX(0.8537);">Pair 13 -- <span style="font-size:6.7px">上行</span></div>
<div class="m" style="left:840.00px;transform-origin:0 50%;top:384px;font-size:7.3px;color:#b82020;font-weight:bold;transform:translateY(0.58px) scaleX(0.8537);">Pair 14 -- <span style="font-size:6.7px">上行</span></div>
<div class="m" style="left:840.00px;transform-origin:0 50%;top:391px;font-size:7.3px;color:#5c98b8;transform:translateY(0.34px) scaleX(0.8537);">Pair 15 -- <span style="font-size:6.7px">上行</span></div>
<div class="s" style="left:2.6px;top:590.4px;font-size:8px;line-height:10px;color:#222;">Pairs: 10</div>
<div class="s" style="left:54.4px;top:590.4px;font-size:8px;line-height:10px;color:#222;">Start: 2020/4/16, 23:57:48</div>
<div class="s" style="left:212.3px;top:590.4px;font-size:8px;line-height:10px;color:#222;">Ixia Configuration</div>
<div class="s" style="left:286.7px;top:590.4px;font-size:8px;line-height:10px;color:#222;">End: 2020/4/16, 23:59:40</div>
<div class="s" style="left:384.2px;top:590.4px;font-size:8px;line-height:10px;color:#222;">Run time: 00:01:51</div>
<div class="s" style="left:456.8px;top:590.4px;font-size:8px;line-height:10px;color:#222;">Ran to completion</div>
</div>
</div></body></html>
